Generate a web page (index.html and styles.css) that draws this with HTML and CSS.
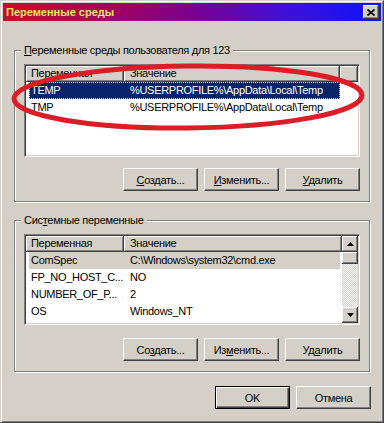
FILE: index.html
```html
<!DOCTYPE html>
<html lang="ru">
<head>
<meta charset="utf-8">
<title>Переменные среды</title>
<link rel="stylesheet" href="styles.css">
</head>
<body>
<div class="window">
  <div class="titlebar">
    <span class="title">Переменные среды</span>
    <span class="close"><svg width="8" height="7" viewBox="0 0 8 7"><path d="M0.5 0.5L7.5 6.5M7.5 0.5L0.5 6.5" stroke="#000" stroke-width="1.7"/></svg></span>
  </div>
  <div class="body">
    <fieldset class="group">
      <legend><u>П</u>еременные среды пользователя для 123</legend>
      <div class="list">
        <div class="listmain">
          <div class="header">
            <div class="hcell c1">Переменная</div>
            <div class="hcell c2">Значение</div>
            <div class="hcell fill"></div>
          </div>
          <div class="row sel"><span class="c1">TEMP</span><span class="c2">%USERPROFILE%\AppData\Local\Temp</span></div>
          <div class="row"><span class="c1">TMP</span><span class="c2">%USERPROFILE%\AppData\Local\Temp</span></div>
        </div>
      </div>
      <div class="buttons">
        <button class="btn"><u>С</u>оздать...</button>
        <button class="btn"><u>И</u>зменить...</button>
        <button class="btn"><u>У</u>далить</button>
      </div>
    </fieldset>

    <fieldset class="group group2">
      <legend>Сис<u>т</u>емные переменные</legend>
      <div class="list">
        <div class="listmain">
          <div class="header">
            <div class="hcell c1">Переменная</div>
            <div class="hcell c2 last">Значение</div>
          </div>
          <div class="row inactive"><span class="c1">ComSpec</span><span class="c2">C:\Windows\system32\cmd.exe</span></div>
          <div class="row"><span class="c1">FP_NO_HOST_C...</span><span class="c2">NO</span></div>
          <div class="row"><span class="c1">NUMBER_OF_P...</span><span class="c2">2</span></div>
          <div class="row"><span class="c1">OS</span><span class="c2">Windows_NT</span></div>
          <div class="row"><span class="c1">Path</span><span class="c2">C:\Windows\system32;C:\Windows;C:\Windows\System32\Wbem</span></div>
        </div>
        <div class="scrollbar">
          <div class="sbtn"><svg width="7" height="4" viewBox="0 0 7 4"><path d="M3.5 0L7 4H0z" fill="#000"/></svg></div>
          <div class="thumb"></div>
          <div class="track"></div>
          <div class="sbtn"><svg width="7" height="4" viewBox="0 0 7 4"><path d="M0 0H7L3.5 4z" fill="#000"/></svg></div>
        </div>
      </div>
      <div class="buttons">
        <button class="btn">Со<u>з</u>дать...</button>
        <button class="btn">Из<u>м</u>енить...</button>
        <button class="btn">Уд<u>а</u>лить</button>
      </div>
    </fieldset>

    <div class="dialog-buttons">
      <button class="btn default">OK</button>
      <button class="btn">Отмена</button>
    </div>
  </div>
  <svg class="annotation" width="384" height="423" viewBox="0 0 384 423">
    <ellipse cx="188" cy="97" rx="174" ry="31" fill="none" stroke="#dc1c26" stroke-width="5" transform="rotate(-0.6 188 97)"/>
  </svg>
</div>
</body>
</html>
```

FILE: styles.css
```css
* { box-sizing: border-box; }

html, body {
  margin: 0;
  padding: 0;
  background: #d4d0c8;
}

body {
  font-family: "Liberation Sans", Arial, sans-serif;
  font-size: 11px;
  color: #000;
  letter-spacing: -0.3px;
}

.window {
  position: relative;
  width: 384px;
  height: 423px;
  background: #d4d0c8;
  border: 1px solid;
  border-color: #d4d0c8 #404040 #404040 #d4d0c8;
  box-shadow: inset 1px 1px #fff, inset -1px -1px #808080;
  padding: 2px;
}

.titlebar {
  height: 18px;
  display: flex;
  align-items: center;
  justify-content: space-between;
  padding: 0 2px 0 3px;
  background: linear-gradient(to right, #c80c2a 0%, #a20060 30%, #7a0090 50%, #4010d8 75%, #0a14ff 100%);
}

.title {
  color: #f8e868;
  font-weight: bold;
  letter-spacing: 0;
}

.close {
  width: 16px;
  height: 14px;
  background: #d4d0c8;
  display: flex;
  align-items: center;
  justify-content: center;
  box-shadow: inset -1px -1px #404040, inset 1px 1px #fff, inset -2px -2px #808080;
}

.body {
  display: flex;
  flex-direction: column;
  padding: 23px 10px 0 11px;
}

.group {
  margin: 0;
  padding: 0 9px 10px 9px;
  border: 1px solid #808080;
  box-shadow: inset 1px 1px #fff, 1px 1px #fff;
  min-width: 0;
  width: 356px;
}

.group2 {
  margin-top: 12px;
}

legend {
  padding: 0 3px;
  margin-left: -3px;
  background: #d4d0c8;
  line-height: 13px;
}

.list {
  margin-top: 7px;
  height: 93px;
  display: flex;
  background: #fff;
  border: 1px solid;
  border-color: #808080 #fff #fff #808080;
  box-shadow: inset 1px 1px #404040, inset -1px -1px #d4d0c8;
  padding: 1px;
  overflow: hidden;
}

.group2 .list {
  height: 91px;
}

.listmain {
  flex: 1;
  min-width: 0;
  overflow: hidden;
}

.header {
  display: flex;
  height: 16px;
}

.hcell {
  background: #d4d0c8;
  height: 16px;
  line-height: 15px;
  white-space: nowrap;
  overflow: hidden;
  border-right: 1px solid #404040;
  border-bottom: 1px solid #404040;
  box-shadow: inset 1px 1px #fff, inset -1px -1px #808080;
}

.hcell.c1 { width: 98px; padding-left: 5px; }
.hcell.c2 { width: 216px; padding-left: 6px; }
.hcell.c2.last { flex: 1; }
.hcell.fill { flex: 1; }

.row {
  display: flex;
  height: 17px;
  line-height: 16px;
  margin-left: 3px;
  width: 311px;
  white-space: nowrap;
}

.row .c1 { width: 95px; padding-left: 2px; overflow: hidden; }
.row .c2 { flex: 1; padding-left: 6px; overflow: hidden; }

.row.sel {
  background: #0a246a;
  color: #fff;
  outline: 1px dotted #d8d8ff;
  outline-offset: -1px;
}

.row.inactive {
  background: #d4d0c8;
}

.scrollbar {
  width: 16px;
  display: flex;
  flex-direction: column;
}

.sbtn, .thumb {
  width: 16px;
  height: 16px;
  background: #d4d0c8;
  display: flex;
  align-items: center;
  justify-content: center;
  box-shadow: inset -1px -1px #404040, inset 1px 1px #fff, inset -2px -2px #808080;
}

.thumb { height: 12px; }

.track {
  flex: 1;
  background-color: #fff;
  background-image: conic-gradient(#d4d0c8 25%, #fff 0 50%, #d4d0c8 0 75%, #fff 0);
  background-size: 2px 2px;
}

.buttons, .dialog-buttons {
  display: flex;
  justify-content: flex-end;
  gap: 6px;
}

.buttons { margin-top: 11px; }

.group2 .buttons { margin-top: 13px; }

.dialog-buttons {
  margin-top: 14px;
}

.btn {
  width: 75px;
  height: 23px;
  margin: 0;
  padding: 0;
  font: inherit;
  letter-spacing: inherit;
  color: #000;
  background: #d4d0c8;
  border: 1px solid;
  border-color: #fff #404040 #404040 #fff;
  box-shadow: inset -1px -1px #808080;
  border-radius: 0;
}

.btn.default {
  border: 1px solid #000;
  box-shadow: inset 1px 1px #fff, inset -1px -1px #404040, inset -2px -2px #808080;
}

.annotation {
  position: absolute;
  left: -1px;
  top: -1px;
  pointer-events: none;
}
```
